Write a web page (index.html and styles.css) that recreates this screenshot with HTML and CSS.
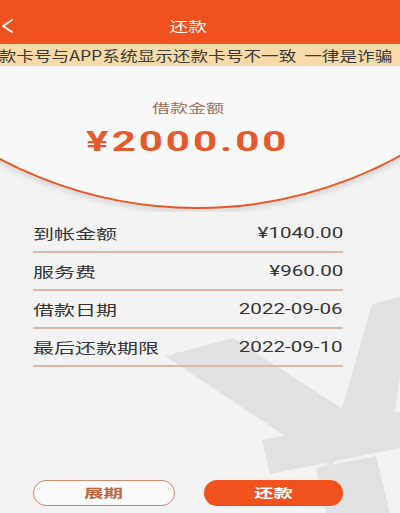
FILE: index.html
```html
<!DOCTYPE html>
<html lang="zh-CN">
<head>
<meta charset="utf-8">
<title>还款</title>
<link rel="stylesheet" href="styles.css">
</head>
<body>
<svg class="watermark" width="400" height="513" viewBox="0 0 400 513" aria-hidden="true">
  <g fill="#e2e2e2">
    <polygon points="165,356 233,338 372,428 330,466"/>
    <polygon points="372,304 412,294 392,432 334,436"/>
    <polygon points="262,440 402,411 410,446 270,474"/>
    <polygon points="316,468 376,456 390,513 326,513"/>
  </g>
</svg>
<header class="topbar">
  <svg class="back" width="14" height="16" viewBox="0 0 14 16" aria-hidden="true">
    <path d="M11 2 L2 8 L11 14" fill="none" stroke="#ffffff" stroke-width="2" stroke-linecap="round" stroke-linejoin="round"/>
  </svg>
  <h1 class="title"><span class="wide">还款</span></h1>
  <span></span>
</header>
<div class="notice"><span class="notice-text">还款卡号与APP系统显示还款卡号不一致&nbsp;&nbsp;一律是诈骗</span></div>
<section class="hero">
  <p class="hero-label"><span class="wide">借款金额</span></p>
  <p class="hero-amount"><span class="wide">¥2000.00</span></p>
</section>
<ul class="details">
  <li class="row"><span class="label">到帐金额</span><span class="value">¥1040.00</span></li>
  <li class="row"><span class="label">服务费</span><span class="value">¥960.00</span></li>
  <li class="row"><span class="label">借款日期</span><span class="value">2022-09-06</span></li>
  <li class="row"><span class="label">最后还款期限</span><span class="value">2022-09-10</span></li>
</ul>
<div class="actions">
  <button class="btn btn-outline"><span class="wide">展期</span></button>
  <button class="btn btn-primary"><span class="wide">还款</span></button>
</div>
</body>
</html>
```
FILE: styles.css
```css
* { box-sizing: border-box; margin: 0; padding: 0; }
html { background: #f3f3f3; }
body {
  width: 400px;
  height: 513px;
  overflow: hidden;
  position: relative;
  font-family: "Noto Sans CJK SC", sans-serif;
  color: #363636;
}
.watermark { position: absolute; left: 0; top: 0; z-index: -1; }
.wide { display: inline-block; transform: scaleX(1.5); white-space: nowrap; }

.topbar {
  height: 44px;
  padding-top: 8px;
  background: #f1511e;
  display: grid;
  grid-template-columns: 28px 1fr 52px;
  align-items: center;
  color: #fff;
}
.back { display: block; margin-left: 1px; }
.title { font-size: 13px; font-weight: 400; line-height: 18px; text-align: center; }
.title .wide { transform: scaleX(1.45); }

.notice {
  height: 22px;
  background: #f6dba8;
  overflow: hidden;
  white-space: nowrap;
  display: flex;
  align-items: center;
}
.notice-text {
  display: inline-block;
  flex: none;
  font-size: 14px;
  line-height: 22px;
  color: #3b3b3b;
  transform-origin: left center;
  transform: scaleX(1.26);
  margin-left: -18.6px;
}

.hero {
  position: relative;
  isolation: isolate;
  overflow: hidden;
  height: 146px;
  padding: 34px 24px 0 0;
  text-align: center;
}
.hero::before {
  content: "";
  position: absolute;
  z-index: -1;
  left: -225px;
  top: -701px;
  width: 840px;
  height: 840px;
  border-radius: 50%;
  border: 2px solid #e8582a;
  background: #f8f8f8;
  box-shadow: 0 3px 6px rgba(0, 0, 0, 0.12);
}
.hero-label { font-size: 12px; line-height: 16px; color: #9c6f5c; }
.hero-amount {
  margin-top: 9px;
  font-family: Roboto, sans-serif;
  font-weight: 700;
  font-size: 28px;
  line-height: 34px;
  color: #e5592a;
}
.hero-amount .wide { letter-spacing: 2px; }

.details { list-style: none; margin: 3px 57px 0 33px; }
.row {
  height: 38px;
  border-bottom: 2px solid #dbbcab;
  display: flex;
  justify-content: space-between;
  align-items: center;
  font-size: 14px;
  line-height: 20px;
}
.label { display: inline-block; white-space: nowrap; transform-origin: left center; transform: scaleX(1.5); }
.value {
  display: inline-block;
  font-family: Roboto, sans-serif;
  white-space: nowrap;
  transform-origin: right center;
  transform: scaleX(1.47);
}

.actions { margin: 113px 57px 0 33px; display: flex; gap: 29px; }
.btn {
  flex: 1;
  height: 26px;
  border-radius: 13px;
  font-family: "Noto Sans CJK SC", sans-serif;
  font-size: 12.5px;
  font-weight: 700;
  line-height: 16px;
  display: flex;
  align-items: center;
  justify-content: center;
  cursor: pointer;
}
.btn .wide { transform: scaleX(1.56); }
.btn-outline { background: #fafafa; border: 1.5px solid #c98a70; color: #c0653f; }
.btn-primary { background: #f1511e; border: none; color: #fff; }
```
